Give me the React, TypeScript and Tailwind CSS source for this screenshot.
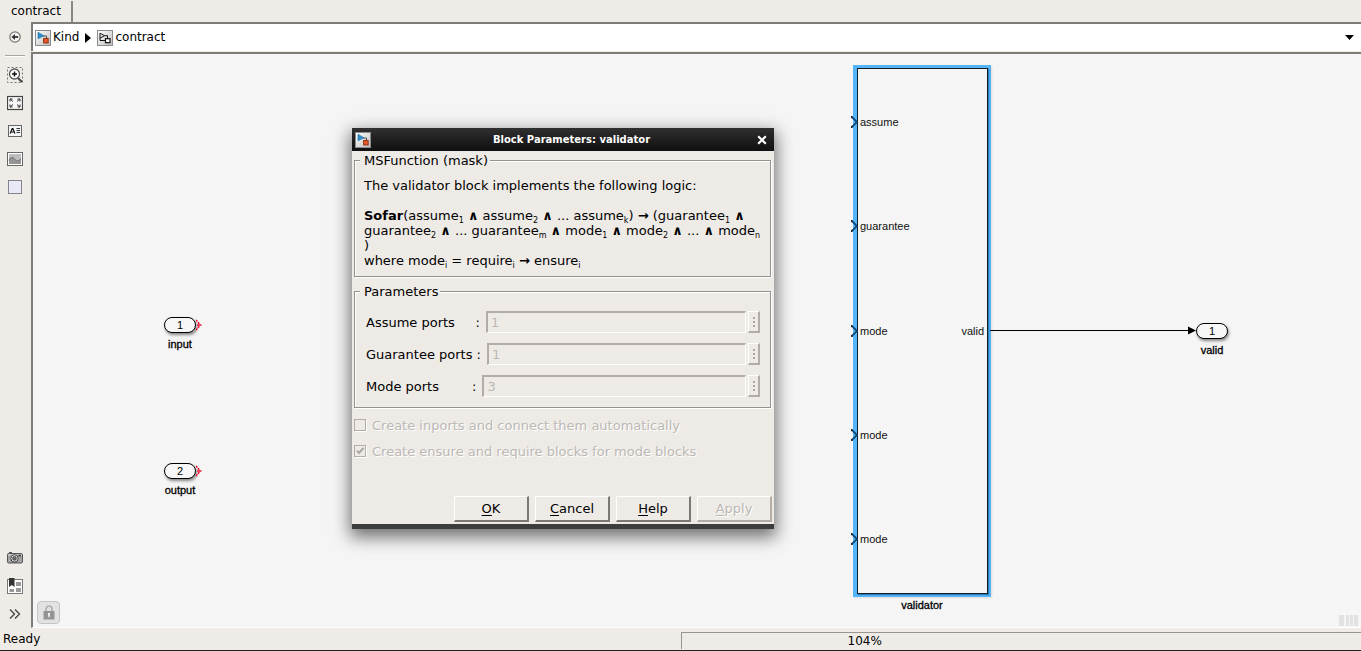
import type { ReactNode } from 'react';

const sunken = 'border-t-2 border-l-2 border-[#7f7b77]';

function ModelIcon({ className = '' }: { className?: string }) {
  return (
    <svg width="16" height="16" viewBox="0 0 16 16" className={className} aria-hidden="true">
      <defs>
        <linearGradient id="tile" x1="0" y1="0" x2="1" y2="1">
          <stop offset="0" stopColor="#ffffff" />
          <stop offset="1" stopColor="#bfbfbf" />
        </linearGradient>
      </defs>
      <rect x="0.5" y="0.5" width="15" height="15" fill="url(#tile)" stroke="#8b8b8b" />
      <path d="M8 6h3.5v3" fill="none" stroke="#555" />
      <path d="M3 2.2 9 5.8 3 8.8z" fill="#2f8fca" stroke="#1d6da3" strokeWidth="0.6" />
      <rect x="8.6" y="8.4" width="4.6" height="4.6" fill="#e2592b" stroke="#8f2d10" strokeWidth="0.9" />
    </svg>
  );
}

function SubsystemIcon() {
  return (
    <svg width="16" height="16" viewBox="0 0 16 16" aria-hidden="true">
      <rect x="0.5" y="0.5" width="15" height="15" fill="url(#tile)" stroke="#8b8b8b" />
      <path d="M3 3.2 7.5 5.7 3 8.2zM7.5 5.7h3v3M3 8v2.5h5.5" fill="none" stroke="#111" />
      <rect x="8.5" y="8.7" width="4.5" height="4" fill="#fff" stroke="#111" strokeWidth="1.2" />
    </svg>
  );
}

function ToolButton({ label, children }: { label: string; children: ReactNode }) {
  return (
    <button type="button" aria-label={label} className="flex h-7 w-7 items-center justify-center">
      <svg width="16" height="16" viewBox="0 0 16 16" aria-hidden="true">
        {children}
      </svg>
    </button>
  );
}

function Toolbar() {
  return (
    <aside className="flex w-[31px] shrink-0 flex-col items-center pt-px pr-0.5">
      <ToolButton label="Back">
        <circle cx="8" cy="8" r="5.2" fill="#f6f5f3" stroke="#77756f" strokeWidth="1.2" />
        <path d="M11.2 8H7" stroke="#333" strokeWidth="1.8" />
        <path d="M4.4 8 8 5v6z" fill="#333" />
      </ToolButton>
      <div className="mt-1 mb-1 h-0.5 w-5 border-t border-b border-t-[#a8a49f] border-b-white" />
      <ToolButton label="Zoom in">
        <rect x="0.5" y="0.5" width="15" height="15" fill="none" stroke="#777" strokeDasharray="2 2" />
        <path d="m11 11 4 4" stroke="#444" strokeWidth="2" />
        <circle cx="7.5" cy="7" r="5" fill="#fff" stroke="#555" strokeWidth="1.3" />
        <path d="M5 7h5M7.5 4.5v5" stroke="#111" strokeWidth="1.5" />
      </ToolButton>
      <ToolButton label="Fit to view">
        <rect x="0.5" y="1.5" width="15" height="13" fill="#f7f7f7" stroke="#444" strokeWidth="1.2" />
        <path d="M3 6.5V4h2.5M3 4l3 2.5M13 6.5V4h-2.5M13 4l-3 2.5M3 9.5V12h2.5M3 12l3-2.5M13 9.5V12h-2.5M13 12l-3-2.5" fill="none" stroke="#333" />
      </ToolButton>
      <ToolButton label="Annotation">
        <rect x="1.5" y="2.5" width="13" height="11" fill="#f5f6f8" stroke="#666" />
        <path d="m3.2 10.5 2-5h.7l2 5M4.1 9h3" fill="none" stroke="#111" strokeWidth="1.2" />
        <path d="M9.5 5.5h3.5M9.5 7.5h3.5M9.5 9.5h3.5" stroke="#333" />
      </ToolButton>
      <ToolButton label="Image">
        <rect x="0.5" y="1.5" width="15" height="13" fill="#fff" stroke="#666" />
        <rect x="2" y="3" width="12" height="10" fill="#bdbdbd" />
        <path d="M2 10c2-4 4-4 6-1s4 1 6-1v5H2z" fill="#949494" />
        <path d="M2 9.5c2-4 4-4 6-1s4 1 6-1" fill="none" stroke="#666" />
      </ToolButton>
      <ToolButton label="Area">
        <rect x="1.5" y="1.5" width="13" height="13" fill="#e9e9f7" stroke="#83838c" />
      </ToolButton>
      <div className="mt-auto flex flex-col">
        <ToolButton label="Screenshot">
          <path d="M2 2h3v2H2z" fill="#555" />
          <rect x="0.5" y="3.5" width="15" height="9.5" rx="1.2" fill="#a4a4a4" stroke="#555" />
          <path d="M1 5h14" stroke="#ddd" />
          <path d="M11.5 4.8h2.5v1.5h-2.5z" fill="#333" />
          <circle cx="7.5" cy="8.4" r="3.7" fill="#ddd" stroke="#444" />
          <circle cx="7.5" cy="8.4" r="1.8" fill="#777" stroke="#333" strokeWidth="0.8" />
        </ToolButton>
        <ToolButton label="Model browser">
          <rect x="0.5" y="1.5" width="15" height="14" fill="#fff" stroke="#777" />
          <path d="M9 4h5v4H9zM9 10h5v4H9zM2.5 11H7v3H2.5z" fill="#999" />
          <path d="M2 0h5.5v9L4.8 7 2 9z" fill="#333" />
        </ToolButton>
        <ToolButton label="More">
          <path d="m3 3.5 4.5 4.5L3 12.5M8 3.5 12.5 8 8 12.5" fill="none" stroke="#444" strokeWidth="1.3" />
        </ToolButton>
      </div>
    </aside>
  );
}

function PortBlock({ n, name, className, open }: { n: string; name: string; className: string; open?: boolean }) {
  return (
    <div className={`absolute flex w-8 flex-col items-center ${className}`}>
      <div className="flex h-4 w-8 items-center justify-center rounded-full border border-black bg-[#f7f7f7] text-[11px] leading-none shadow-[1px_2px_3px_rgba(0,0,0,0.45)]">
        {n}
      </div>
      <span className="mt-1 text-[11px] leading-[14px] [-webkit-text-stroke:0.3px_#000]">{name}</span>
      {open && (
        <svg className="absolute top-0.5 left-8" width="7" height="12" viewBox="0 0 7 12" aria-hidden="true">
          <path d="m0 1 3.5 4M0 11l3.5-4" stroke="#f00020" strokeWidth="1.5" strokeDasharray="2 1" />
          <path d="M1 6h4.5" stroke="#f00020" strokeWidth="1.4" />
        </svg>
      )}
    </div>
  );
}

function ValidatorBlock() {
  const inputs = ['assume', 'guarantee', 'mode', 'mode', 'mode'];
  return (
    <div className="absolute top-[11px] left-[820px] flex w-[138px] flex-col items-center">
      <div className="h-[532px] w-full border-[3px] border-l-4 border-[#56b4f8] bg-[#f5f5f5] shadow-[1px_1px_2px_rgba(0,0,0,0.1)]">
        <div className="flex h-full flex-col justify-between border border-[#10202c] pt-[45px] pb-[46px] pl-0.5 shadow-[1px_1px_1px_#2c7cb4]">
          {inputs.map((name, i) => (
            <div key={i} className="relative flex h-4 items-center justify-between pr-[3px] text-[11px] leading-4 text-[#111]">
              <svg className="absolute top-0.5 -left-[9px]" width="7" height="12" viewBox="0 0 7 12" aria-hidden="true">
                <path d="m0 .5 1.5 1M0 11.5l1.5-1" stroke="#111" strokeWidth="2" />
                <path d="M1 1.2 6 6 1 10.8" fill="none" stroke="#0e4674" strokeWidth="1.8" />
              </svg>
              <span>{name}</span>
              {i === 2 && <span>valid</span>}
            </div>
          ))}
        </div>
      </div>
      <span className="mt-px text-[11px] leading-[14px] [-webkit-text-stroke:0.3px_#000]">validator</span>
    </div>
  );
}

const group =
  'mr-[3px] ml-0.5 min-w-0 border border-[#94918e] shadow-[1px_1px_0_#fff,inset_1px_1px_0_#fff]';

function Sub({ children }: { children: ReactNode }) {
  return <sub className="-bottom-[3px] text-[8px]">{children}</sub>;
}

function And() {
  return <b className="font-bold">∧</b>;
}

function ParamRow({ id, label, value }: { id: string; label: string; value: string }) {
  return (
    <div className="flex h-[22px] items-center">
      <label htmlFor={id} className="mr-1.5 whitespace-pre">
        {label}
      </label>
      <input
        id={id}
        disabled
        defaultValue={value}
        className="h-[22px] min-w-0 flex-1 border-t-2 border-r border-b border-l-2 border-t-[#b3aca7] border-r-white border-b-white border-l-[#b3aca7] bg-transparent px-[3px] text-[#bcb8b4]"
      />
      <button
        type="button"
        disabled
        aria-label={`More options for ${id} ports`}
        className="ml-0.5 flex h-[22px] w-3 items-center justify-center border-t border-r-2 border-b-2 border-l border-t-white border-r-[#b3aca7] border-b-[#b3aca7] border-l-white"
      >
        <svg width="2" height="10" viewBox="0 0 2 10" aria-hidden="true">
          <path d="M0 0h2v2H0zM0 4h2v2H0zM0 8h2v2H0z" fill="#aaa6a2" />
        </svg>
      </button>
    </div>
  );
}

function CheckRow({ label, checked }: { label: string; checked?: boolean }) {
  return (
    <label className="relative flex h-[26px] items-center gap-1.5 text-[#bcb8b4] [text-shadow:1px_1px_0_#fff]">
      <input
        type="checkbox"
        disabled
        defaultChecked={checked}
        className="h-3 w-3 appearance-none border border-[#b3aca7] shadow-[1px_1px_0_#fff]"
      />
      {checked && (
        <svg className="absolute top-[7px] left-0" width="12" height="12" viewBox="0 0 12 12" aria-hidden="true">
          <path d="m3 5.5 2 2.5 4.5-5" fill="none" stroke="#aaa6a2" strokeWidth="2" />
        </svg>
      )}
      {label}
    </label>
  );
}

function DialogButton({ label, disabled }: { label: string; disabled?: boolean }) {
  const tone = disabled
    ? 'border-r-[#b3aca7] border-b-[#b3aca7] text-[#bcb8b4] [text-shadow:1px_1px_0_#fff]'
    : 'border-r-[#7b7875] border-b-[#7b7875] text-black';
  return (
    <button
      type="button"
      disabled={disabled}
      className={`h-[26px] w-[75px] border-t border-r-2 border-b-2 border-l border-t-white border-l-white ${tone}`}
    >
      <span className="underline underline-offset-2">{label[0]}</span>
      {label.slice(1)}
    </button>
  );
}

function ParametersDialog() {
  return (
    <div
      role="dialog"
      aria-labelledby="dialog-title"
      className="absolute top-[74px] left-[319px] flex w-[422px] flex-col border-b-[5px] border-[#3d3d3d] bg-[#eeebe7] text-[13px] leading-[15px] shadow-[0_6px_16px_2px_rgba(0,0,0,0.55)]"
    >
      <header className="flex h-[23px] items-center bg-linear-to-b from-[#303030] to-[#101010] pr-1 pl-[3px] text-white">
        <ModelIcon />
        <h1 id="dialog-title" className="flex-1 pl-[18px] text-center text-[10px] font-bold">
          Block Parameters: validator
        </h1>
        <button type="button" aria-label="Close" className="flex h-4 w-4 items-center justify-center">
          <svg width="10" height="10" viewBox="0 0 10 10" aria-hidden="true">
            <path d="m1.2 1.2 7.6 7.6M8.8 1.2 1.2 8.8" stroke="#fff" strokeWidth="2.2" />
          </svg>
        </button>
      </header>

      <fieldset className={`mt-0.5 px-[9px] pb-2 ${group}`}>
        <legend className="-ml-1 bg-[#eeebe7] pr-0.5 pl-1">MSFunction (mask)</legend>
        <p className="mt-2.5">The validator block implements the following logic:</p>
        <p className="mt-[15px] whitespace-nowrap">
          <b>Sofar</b>(assume<Sub>1</Sub> <And /> assume<Sub>2</Sub> <And /> ... assume<Sub>k</Sub>) <b>→</b> (guarantee
          <Sub>1</Sub> <And />
          <br />
          guarantee<Sub>2</Sub> <And /> ... guarantee<Sub>m</Sub> <And /> mode<Sub>1</Sub> <And /> mode<Sub>2</Sub>{' '}
          <And /> ... <And /> mode<Sub>n</Sub>
          <br />)<br />
          where mode<Sub>i</Sub> = require<Sub>i</Sub> <b>→</b> ensure<Sub>i</Sub>
        </p>
      </fieldset>

      <fieldset className={`mt-[7px] px-[9px] pb-2.5 ${group}`}>
        <legend className="-ml-1 bg-[#eeebe7] pr-0.5 pl-1">Parameters</legend>
        <div className="mt-3 flex flex-col gap-2.5 pr-px pl-0.5">
          <ParamRow id="assume" label="Assume ports     :" value="1" />
          <ParamRow id="guarantee" label="Guarantee ports :" value="1" />
          <ParamRow id="mode" label="Mode ports        :" value="3" />
        </div>
      </fieldset>

      <div className="mt-1 px-0.5">
        <CheckRow label="Create inports and connect them automatically" />
        <CheckRow label="Create ensure and require blocks for mode blocks" checked />
      </div>

      <footer className="mt-8 flex justify-end gap-1.5 pr-0.5 pb-0.5">
        <DialogButton label="OK" />
        <DialogButton label="Cancel" />
        <DialogButton label="Help" />
        <DialogButton label="Apply" disabled />
      </footer>
    </div>
  );
}

export default function App() {
  return (
    <div className="flex min-h-screen flex-col border-b border-[#222] bg-[#efece7] font-['DejaVu_Sans',sans-serif] text-[12px] leading-[15px] text-black">
      <div role="tablist" className="flex h-[22px] items-end">
        <button type="button" role="tab" aria-selected="true" className="h-[21px] border-r-2 border-[#8b8783] pr-2.5 pl-[11px]">
          contract
        </button>
      </div>

      <div className="flex flex-1">
        <Toolbar />
        <div className="flex min-w-0 flex-1 flex-col">
          <nav aria-label="Model path" className={`flex h-[29px] items-center bg-white pl-0.5 ${sunken}`}>
            <ModelIcon />
            <a href="#kind" className="ml-0.5">Kind</a>
            <svg className="mx-1.5" width="6" height="10" viewBox="0 0 6 10" aria-hidden="true">
              <path d="M0 0v10l6-5z" />
            </svg>
            <SubsystemIcon />
            <a href="#contract" className="ml-0.5">contract</a>
            <button type="button" aria-label="Path history" className="ml-auto flex h-5 w-6 items-center justify-center">
              <svg width="9" height="5" viewBox="0 0 9 5" aria-hidden="true">
                <path d="M0 0h9L4.5 5z" />
              </svg>
            </button>
          </nav>

          <main className={`relative mt-px flex-1 overflow-hidden border-b border-b-white bg-[#f5f5f5] font-['Liberation_Sans',sans-serif] ${sunken}`}>
            <PortBlock n="1" name="input" className="top-[263px] left-[131px]" open />
            <PortBlock n="2" name="output" className="top-[409px] left-[131px]" open />
            <ValidatorBlock />
            <svg className="absolute top-[272px] left-[957px]" width="207" height="10" viewBox="0 0 207 10" aria-hidden="true">
              <path d="M0 4.5h199" stroke="#000" />
              <path d="M198 .5v8l8-4z" />
            </svg>
            <PortBlock n="1" name="valid" className="top-[269px] left-[1163px]" />
            <button
              type="button"
              aria-label="Lock"
              className="absolute bottom-[3px] left-1 flex h-[23px] w-[23px] items-center justify-center rounded border border-[#c4c4c4] bg-[#e2e2e2]"
            >
              <svg width="12" height="15" viewBox="0 0 12 15" aria-hidden="true">
                <path d="M3 6V4a3 3 0 0 1 6 0v2" fill="none" stroke="#999" strokeWidth="1.2" />
                <rect x="0.5" y="6" width="11" height="8.5" fill="#949494" />
                <path d="M5 8h2v2l-.5 2.5h-1L5 10z" fill="#eee" />
              </svg>
            </button>
            <svg className="absolute right-0.5 bottom-px" width="20" height="11" viewBox="0 0 20 11" aria-hidden="true">
              <path d="M0 0h5v11H0zM7 0h3v11H7zM11 0h3v11h-3zM15 0h4v11h-4z" fill="#e2e2e2" />
            </svg>
            <div className="font-['DejaVu_Sans',sans-serif]">
              <ParametersDialog />
            </div>
          </main>
        </div>
      </div>

      <footer className="flex h-[22px] items-end">
        <span className="flex-1 pb-[3px] pl-[3px]">Ready</span>
        <div className="mb-px flex h-[17px] w-1/2 items-center border-t border-l border-[#98948f] pl-[166px]">
          104%
        </div>
      </footer>
    </div>
  );
}
